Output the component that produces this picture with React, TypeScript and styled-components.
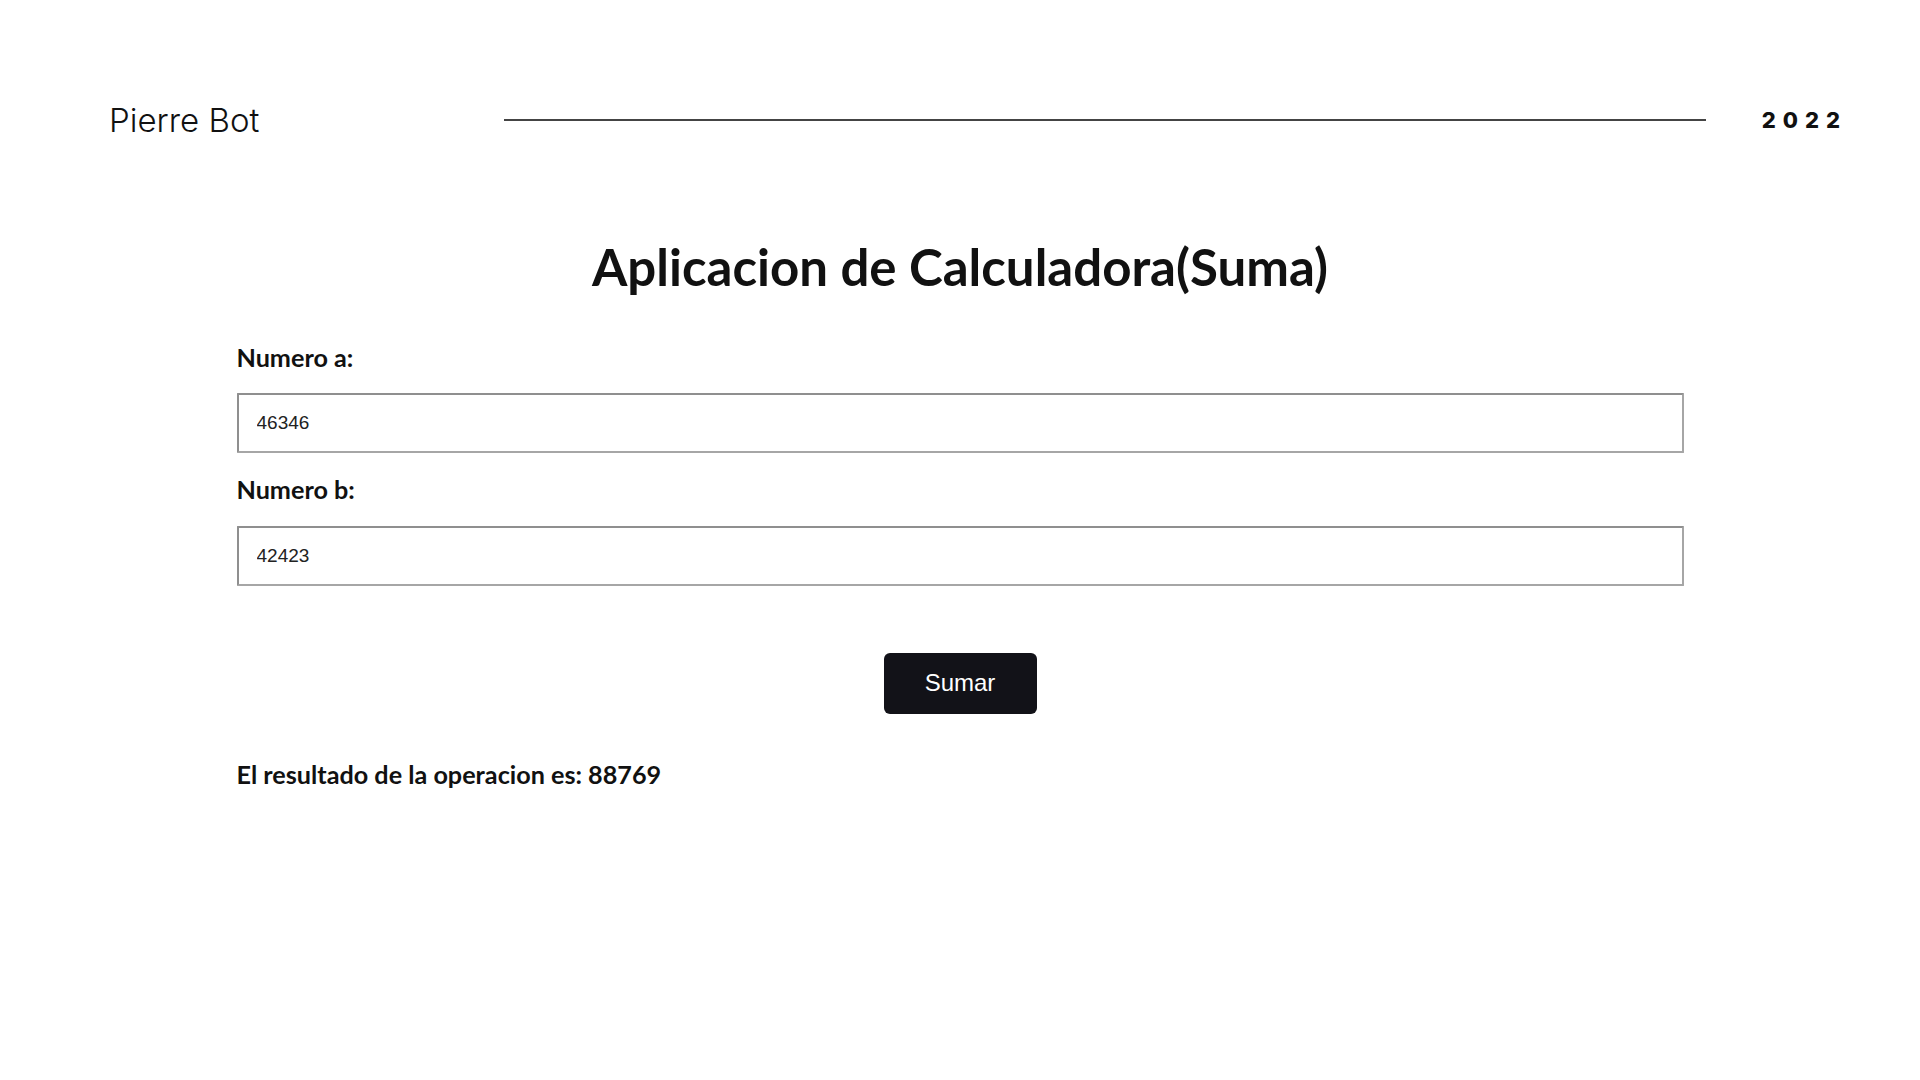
import React, { useState } from "react";
import styled, { createGlobalStyle } from "styled-components";

const Global = createGlobalStyle`
  html, body { margin: 0; padding: 0; background: #ffffff; }
  body { width: 1920px; height: 1080px; overflow: hidden; }
  * { box-sizing: border-box; }
`;

const Page = styled.div`
  width: 1920px;
  height: 1080px;
  background: #fff;
  display: flex;
  flex-direction: column;
`;

const Header = styled.header`
  display: flex;
  align-items: center;
  height: 60px;
  margin-top: 90px;
  padding: 0 80px 0 109px;
`;

const Brand = styled.div`
  font-family: Inter, "Noto Sans", sans-serif;
  font-weight: 300;
  font-size: 33px;
  color: #111;
  width: 395px;
`;

const Rule = styled.div`
  flex: 1;
  height: 1.5px;
  background: #444;
  margin-right: 56px;
`;

const Year = styled.div`
  font-family: Inter, "Liberation Sans", sans-serif;
  font-weight: 800;
  font-size: 22px;
  letter-spacing: 7px;
  color: #111;
  margin-right: -7px;
`;

const Main = styled.main`
  width: 1447px;
  margin: 0 auto;
  display: flex;
  flex-direction: column;
  font-family: Lato, "Noto Sans", sans-serif;
  color: #111;
`;

const Title = styled.h1`
  font-weight: 700;
  font-size: 51px;
  text-align: center;
  margin: 86px 0 0;
  line-height: 1.2;
`;

const Label = styled.label<{ $top: number }>`
  display: block;
  font-weight: 700;
  font-size: 25.2px;
  margin-top: ${(p) => p.$top}px;
  line-height: 1.2;
`;

const Input = styled.input`
  display: block;
  width: 100%;
  height: 60px;
  margin-top: 21px;
  padding: 0 18px;
  border: 2px solid #a6a6a6;
  border-top-color: #8f8f8f;
  border-left-color: #8f8f8f;
  border-radius: 1px;
  font-family: Arial, "Liberation Sans", sans-serif;
  font-size: 19px;
  color: #222;
  outline: none;
  background: #fff;
`;

const ButtonRow = styled.div`
  display: flex;
  justify-content: center;
  margin-top: 67px;
`;

const Button = styled.button`
  width: 153px;
  height: 61px;
  background: #121218;
  color: #fff;
  border: none;
  border-radius: 6px;
  font-family: Arial, "Liberation Sans", sans-serif;
  font-size: 24px;
  cursor: pointer;
`;

const Result = styled.p`
  font-weight: 700;
  font-size: 25.2px;
  margin: 45px 0 0;
  line-height: 1.2;
`;

export default function App() {
  const [a, setA] = useState("46346");
  const [b, setB] = useState("42423");
  const [res, setRes] = useState(88769);
  return (
    <Page>
      <Global />
      <Header>
        <Brand>Pierre Bot</Brand>
        <Rule />
        <Year>2022</Year>
      </Header>
      <Main>
        <Title>Aplicacion de Calculadora(Suma)</Title>
        <Label $top={45}>Numero a:</Label>
        <Input value={a} onChange={(e) => setA(e.target.value)} />
        <Label $top={21}>Numero b:</Label>
        <Input value={b} onChange={(e) => setB(e.target.value)} />
        <ButtonRow>
          <Button onClick={() => setRes(Number(a) + Number(b))}>Sumar</Button>
        </ButtonRow>
        <Result>El resultado de la operacion es: {res}</Result>
      </Main>
    </Page>
  );
}
